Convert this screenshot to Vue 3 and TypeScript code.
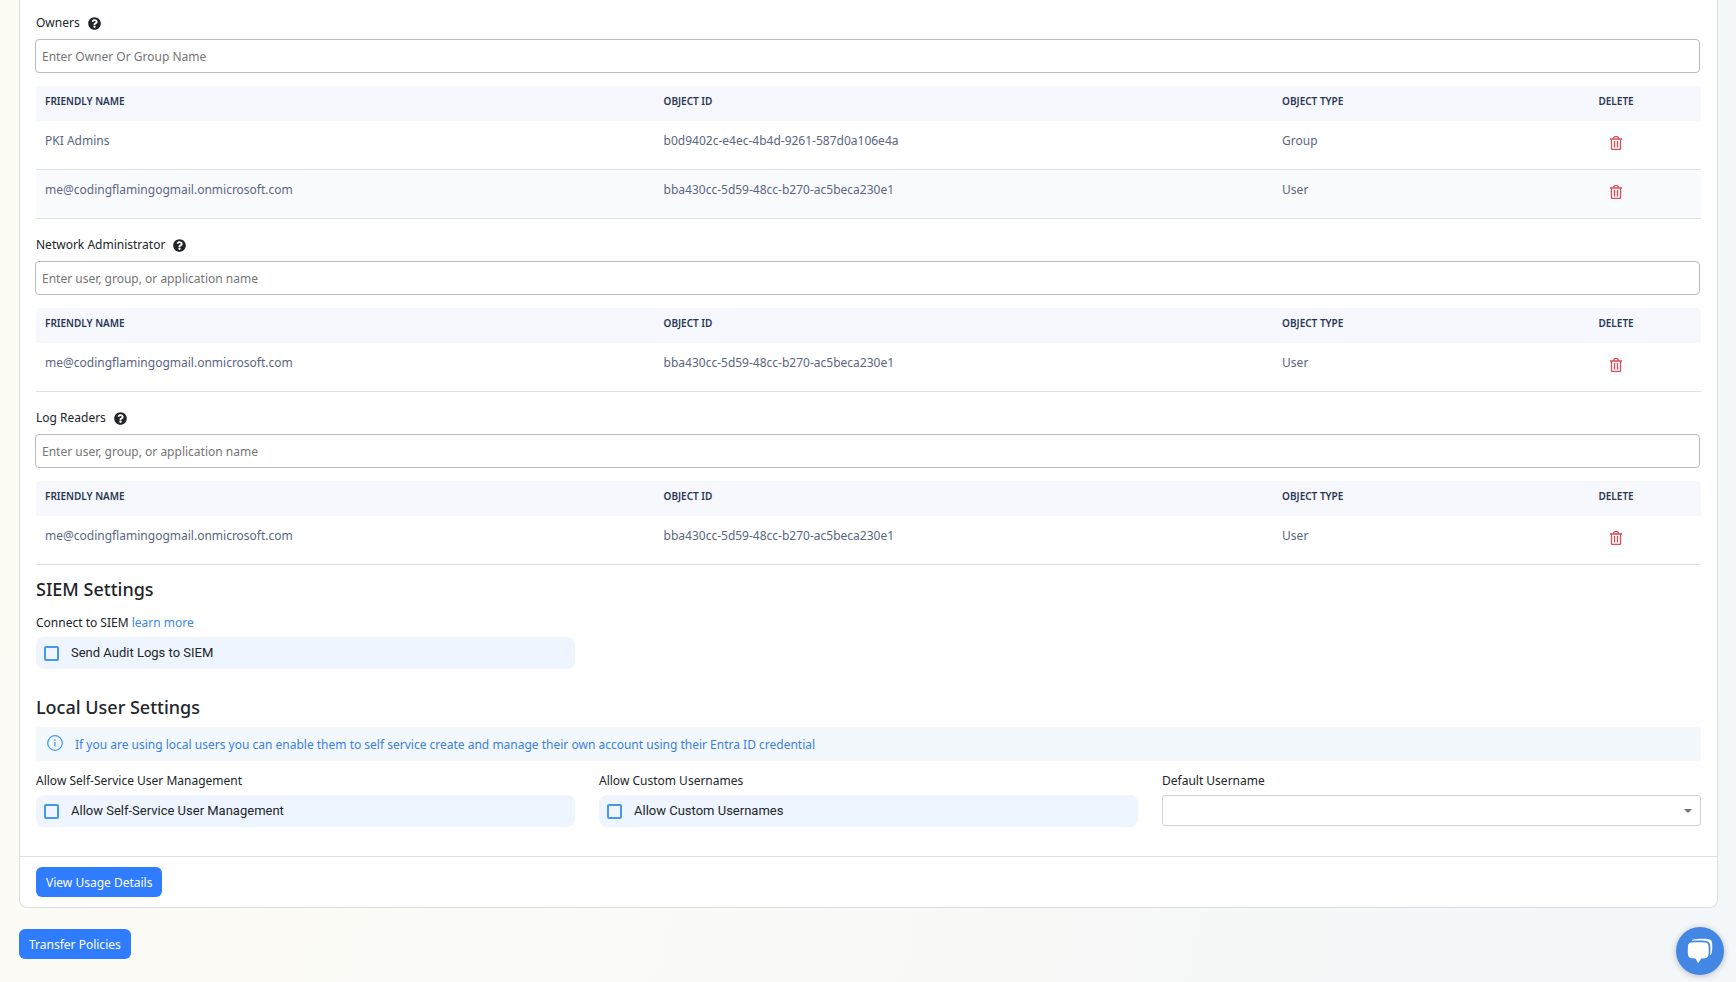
<script setup lang="ts">
import { ref } from 'vue'

interface Principal {
  name: string
  id: string
  type: string
}

interface Section {
  key: string
  label: string
  placeholder: string
  rows: Principal[]
}

const me: Principal = {
  name: 'me@codingflamingogmail.onmicrosoft.com',
  id: 'bba430cc-5d59-48cc-b270-ac5beca230e1',
  type: 'User',
}

const sections = ref<Section[]>([
  {
    key: 'owners',
    label: 'Owners',
    placeholder: 'Enter Owner Or Group Name',
    rows: [{ name: 'PKI Admins', id: 'b0d9402c-e4ec-4b4d-9261-587d0a106e4a', type: 'Group' }, me],
  },
  {
    key: 'network-admin',
    label: 'Network Administrator',
    placeholder: 'Enter user, group, or application name',
    rows: [me],
  },
  {
    key: 'log-readers',
    label: 'Log Readers',
    placeholder: 'Enter user, group, or application name',
    rows: [me],
  },
])

const sendLogs = ref(false)
const selfService = ref(false)
const customNames = ref(false)
const defaultUsername = ref('')

function removeRow(section: Section, index: number) {
  section.rows.splice(index, 1)
}
</script>

<template>
  <main class="page">
    <div class="card">
      <div class="card-body">
        <section v-for="section in sections" :key="section.key" class="people">
          <div class="label-row">
            <label :for="section.key">{{ section.label }}</label>
            <svg class="help" viewBox="0 0 512 512" aria-hidden="true">
              <path
                d="M504 256c0 137-111 248-248 248S8 393 8 256 119 8 256 8s248 111 248 248zM262.700 90c-54.500 0-89.300 23-116.500 63.800-3.500 5.300-2.400 12.400 2.700 16.300l34.700 26.300c5.200 3.900 12.600 3 16.700-2.100 17.900-22.700 30.100-35.800 57.300-35.800 20.400 0 45.700 13.100 45.700 33 0 15-12.400 22.700-32.500 34C247.100 238.500 216 254.900 216 296v4c0 6.600 5.400 12 12 12h56c6.600 0 12-5.400 12-12v-1.300c0-28.500 83.200-29.600 83.200-106.700 0-58-60.200-102-116.500-102zM256 338c-25.400 0-46 20.600-46 46s20.600 46 46 46 46-20.600 46-46-20.600-46-46-46z"
              />
            </svg>
          </div>
          <input :id="section.key" class="search" type="text" :placeholder="section.placeholder" />
          <table>
            <thead>
              <tr>
                <th class="col-wide">Friendly Name</th>
                <th class="col-wide">Object ID</th>
                <th class="col-type">Object Type</th>
                <th class="col-delete">Delete</th>
              </tr>
            </thead>
            <tbody>
              <tr v-for="(row, i) in section.rows" :key="row.id">
                <td>{{ row.name }}</td>
                <td>{{ row.id }}</td>
                <td>{{ row.type }}</td>
                <td class="col-delete">
                  <button class="trash" type="button" :aria-label="`Delete ${row.name}`" @click="removeRow(section, i)">
                    <svg viewBox="0 0 12 14" aria-hidden="true">
                      <path d="M0 3h12M3.500 3c0-1.500.6-2.300 1.500-2.300h2c.9 0 1.500.8 1.500 2.300M1.500 3v9.500c0 .6.400 1 1 1h7c.6 0 1-.4 1-1V3M4.500 5v6.500M7.500 5v6.500" />
                    </svg>
                  </button>
                </td>
              </tr>
            </tbody>
          </table>
        </section>

        <section class="siem">
          <h2>SIEM Settings</h2>
          <p class="caption">Connect to SIEM <a href="#siem">learn more</a></p>
          <div class="grid">
            <label class="check">
              <input v-model="sendLogs" type="checkbox" />
              <span>Send Audit Logs to SIEM</span>
            </label>
          </div>
        </section>

        <section class="local">
          <h2>Local User Settings</h2>
          <p class="banner">
            <svg viewBox="0 0 16 16" aria-hidden="true">
              <circle cx="8" cy="8" r="7.300" />
              <path d="M8 7v4.500M8 4.300v1.400" />
            </svg>
            <span>If you are using local users you can enable them to self service create and manage their own account using their Entra ID credential</span>
          </p>
          <div class="grid">
            <div>
              <p class="caption">Allow Self-Service User Management</p>
              <label class="check">
                <input v-model="selfService" type="checkbox" />
                <span>Allow Self-Service User Management</span>
              </label>
            </div>
            <div>
              <p class="caption">Allow Custom Usernames</p>
              <label class="check">
                <input v-model="customNames" type="checkbox" />
                <span>Allow Custom Usernames</span>
              </label>
            </div>
            <div>
              <label class="caption" for="default-username">Default Username</label>
              <div class="select">
                <select id="default-username" v-model="defaultUsername">
                  <option value=""></option>
                </select>
                <svg viewBox="0 0 8 4" aria-hidden="true"><path d="M0 0h8l-4 4z" /></svg>
              </div>
            </div>
          </div>
        </section>
      </div>
      <footer class="card-footer">
        <button class="primary" type="button">View Usage Details</button>
      </footer>
    </div>
    <button class="primary" type="button">Transfer Policies</button>
    <button class="chat" type="button" aria-label="Open chat">
      <svg viewBox="0 0 26 26" aria-hidden="true">
        <path d="M6 1.600C10 .8 18 .6 21.500 1.300 24 1.800 25 3 25.200 5.500c.3 3.500.1 6.500-.6 9.500-.2 1-.9 2-1.600 2.500.5-4 .6-7.500.1-10.500C22.700 4.300 21.500 3.200 19 2.900 15 2.500 10 2.500 5 2.700c.2-.6.500-1 1-1.100z" />
        <path d="M4.500 4.600c4-.5 9.500-.5 13.500 0 2.300.3 3.300 1.300 3.500 3.500.3 3 .3 6 0 8.500-.2 2.300-1.300 3.300-3.500 3.600l-3.800.3-2.500 4c-.3.5-.7.500-1 0l-2.200-4-4-.3c-2.200-.3-3.200-1.300-3.500-3.600-.3-2.500-.3-5.500 0-8.500.2-2.200 1.200-3.200 3.500-3.500z" />
      </svg>
    </button>
  </main>
</template>

<style>
body {
  margin: 0;
}
</style>

<style scoped>
* {
  box-sizing: border-box;
}
.page {
  min-height: 100vh;
  padding: 0 18px 22px 19px;
  background: linear-gradient(100deg, #fcfbf4 0%, #f9f9f6 45%, #f8f8f7 62%, #f6f8f8 75%, #f4f7f9 100%);
  color: #212529;
  font-family: 'Noto Sans', 'Open Sans', sans-serif;
  font-size: 12px;
  line-height: 20px;
}
button,
input,
select {
  font: inherit;
}
.card {
  margin-bottom: 21px;
  border: 1px solid #dcdee0;
  border-top: 0;
  border-radius: 0 0 8px 8px;
  background: #fff;
}
.card-body {
  padding: 13px 16px 29px;
}
.people {
  margin-bottom: 16px;
}
.label-row {
  display: flex;
  align-items: center;
  gap: 8px;
  margin-bottom: 6px;
}
.help {
  width: 13px;
  height: 13px;
  fill: #212529;
}
.search {
  display: block;
  width: 100%;
  height: 34px;
  margin: 0 0 13px -1px;
  padding: 0 6px;
  border: 1px solid #b9bbbd;
  border-radius: 4px;
  background: #fff;
  color: #212529;
}
.search::placeholder {
  color: #757575;
  opacity: 1;
}
table {
  width: 100%;
  table-layout: fixed;
  border-collapse: separate;
  border-spacing: 0;
}
th {
  height: 35px;
  padding: 5px 9px 10px;
  background: #f6f8fd;
  color: #293755;
  font-size: 10px;
  font-weight: 600;
  text-align: left;
  text-transform: uppercase;
}
th:first-child {
  border-top-left-radius: 4px;
}
th:last-child {
  border-top-right-radius: 4px;
}
.col-wide {
  width: 37.15%;
}
.col-delete {
  width: 10.2%;
  text-align: center;
}
td {
  height: 49px;
  padding: 10px 9px 8px;
  border-bottom: 1px solid #dee2e6;
  color: #596681;
  vertical-align: top;
}
tbody tr:nth-child(even) td {
  background: #fafbff;
}
.trash {
  display: inline-flex;
  padding: 5px 0 0;
  border: 0;
  background: none;
  cursor: pointer;
}
.trash svg {
  width: 12px;
  height: 14px;
  fill: none;
  stroke: #dc4c56;
  stroke-width: 1.3;
}
h2 {
  margin: 0;
  font-size: 18px;
  font-weight: 500;
  line-height: 24px;
}
.siem {
  margin: -4px 0 26px;
}
.siem h2 {
  margin-bottom: 11px;
}
a {
  color: #3b87e4;
  text-decoration: none;
}
.caption {
  display: block;
  margin: 0;
  padding: 1px 0 4px;
}
.grid {
  display: grid;
  grid-template-columns: repeat(3, 1fr);
  gap: 24px;
}
.check {
  display: flex;
  align-items: center;
  gap: 12px;
  height: 32px;
  padding: 0 8px;
  border-radius: 8px;
  background: #eef5fe;
  font-family: Roboto, sans-serif;
  font-size: 13px;
}
.check input {
  appearance: none;
  width: 15px;
  height: 15px;
  margin: 0;
  border: 2px solid #4697ea;
  border-radius: 2px;
}
.check input:checked {
  background: #4697ea;
}
.banner {
  display: flex;
  align-items: flex-start;
  gap: 12px;
  margin: 8px 0 9px;
  padding: 8px 11px 6px;
  border-radius: 4px;
  background: #f3f8fd;
  color: #3a7fe0;
}
.banner svg {
  flex: none;
  width: 16px;
  height: 16px;
  fill: none;
  stroke: #459bee;
  stroke-width: 1.3;
}
.select {
  position: relative;
}
.select select {
  appearance: none;
  display: block;
  width: 100%;
  height: 31px;
  padding: 0 28px 0 8px;
  border: 1px solid #ced2d6;
  border-radius: 3px;
  background: #fff;
}
.select svg {
  position: absolute;
  top: 14px;
  right: 9px;
  width: 8px;
  height: 4px;
  fill: #707377;
  pointer-events: none;
}
.card-footer {
  padding: 10px 16px;
  border-top: 1px solid #dcdee0;
}
.primary {
  display: block;
  height: 30px;
  padding: 2px 10px 0;
  border: 0;
  border-radius: 6px;
  background: #2f7cff;
  color: #fff;
}
.chat {
  position: fixed;
  right: 12px;
  bottom: 7px;
  display: grid;
  place-items: center;
  width: 48px;
  height: 48px;
  padding: 0;
  border: 0;
  border-radius: 50%;
  background: #4287e4;
  box-shadow: 0 1px 6px rgba(0, 0, 0, 0.25);
}
.chat svg {
  width: 26px;
  height: 26px;
  fill: #fff;
}
</style>
